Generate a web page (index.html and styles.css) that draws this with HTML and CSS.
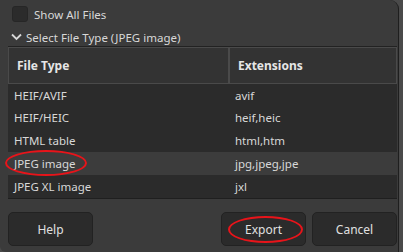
FILE: index.html
```html
<!DOCTYPE html>
<html>
<head>
<meta charset="utf-8">
<link rel="stylesheet" href="styles.css">
</head>
<body>
<div class="dialog">
  <label class="check-row">
    <span class="checkbox"></span>
    <span>Show All Files</span>
  </label>
  <div class="expander">
    <svg class="chev" width="11" height="8" viewBox="0 0 11 8"><path d="M1 1.5 L5.5 6 L10 1.5" fill="none" stroke="#d8d8d8" stroke-width="1.8"/></svg>
    <span>Select File Type (JPEG image)</span>
  </div>
  <div class="table">
    <div class="thead">
      <div class="th c1">File Type</div>
      <div class="th c2">Extensions</div>
    </div>
    <div class="tbody">
      <div class="tr"><div class="td c1">HEIF/AVIF</div><div class="td c2">avif</div></div>
      <div class="tr"><div class="td c1">HEIF/HEIC</div><div class="td c2">heif,heic</div></div>
      <div class="tr"><div class="td c1">HTML table</div><div class="td c2">html,htm</div></div>
      <div class="tr sel"><div class="td c1">JPEG image</div><div class="td c2">jpg,jpeg,jpe</div></div>
      <div class="tr"><div class="td c1">JPEG XL image</div><div class="td c2">jxl</div></div>
    </div>
  </div>
  <div class="buttons">
    <button class="btn">Help</button>
    <span class="spacer"></span>
    <button class="btn">Export</button>
    <button class="btn">Cancel</button>
  </div>
  <span class="mark mark-row"></span>
  <span class="mark mark-btn"></span>
</div>
</body>
</html>
```
FILE: styles.css
```css
html, body {
  margin: 0;
  padding: 0;
}
body {
  background: #4a4a4a;
  width: 403px;
  height: 252px;
  overflow: hidden;
  font-family: "Noto Sans", "Open Sans", sans-serif;
  font-size: 11.5px;
  color: #d8d8d8;
}
.dialog {
  position: relative;
  box-sizing: border-box;
  width: 399px;
  height: 252px;
  background: #3b3b3b;
  border-right: 1px solid #1e1e1e;
  border-top-right-radius: 9px;
  border-bottom-left-radius: 6px;
  padding: 4px 1px 0 8px;
  display: flex;
  flex-direction: column;
}
.check-row {
  display: flex;
  align-items: center;
  height: 20px;
  gap: 6px;
  padding-left: 4px;
}
.checkbox {
  box-sizing: border-box;
  width: 16px;
  height: 16px;
  background: #2b2b2b;
  border: 1px solid #262626;
  border-radius: 3px;
}
.expander {
  display: flex;
  align-items: center;
  height: 18px;
  margin-top: 4px;
  gap: 4px;
  padding-left: 3px;
}
.chev { display: block; }
.table {
  width: 389px;
  height: 153px;
  background: #2b2b2b;
  border-bottom: 1px solid #1f1f1f;
  box-sizing: border-box;
  display: flex;
  flex-direction: column;
}
.thead {
  display: flex;
  height: 38px;
  background: #333333;
  border-top: 1px solid #222;
}
.th {
  box-sizing: border-box;
  border: 1px solid #4a4a4a;
  font-weight: bold;
  font-size: 12px;
  display: flex;
  align-items: center;
  padding-left: 8px;
  color: #e6e6e6;
}
.th.c1 { width: 221px; }
.th.c2 { flex: 1; }
.tr {
  display: flex;
  height: 23px;
  align-items: center;
}
.tr:first-child { height: 22px; }
.tr.sel { background: #3c3c3c; }
.td.c1 { width: 221px; padding-left: 6px; box-sizing: border-box; }
.td.c2 { flex: 1; padding-left: 6px; }
.buttons {
  display: flex;
  margin-top: 13px;
  gap: 6px;
  width: 389px;
}
.spacer { flex: 1; }
.btn {
  box-sizing: border-box;
  width: 85px;
  height: 34px;
  background: #2b2b2b;
  border: 1px solid #222;
  border-radius: 5px;
  color: #e0e0e0;
  font-family: inherit;
  font-size: 12px;
  padding: 0;
}
.mark {
  position: absolute;
  border: 2.5px solid #e8141a;
  border-radius: 50%;
  box-sizing: border-box;
}
.mark-row { left: 5px; top: 150px; width: 82px; height: 26px; }
.mark-btn { left: 228px; top: 216px; width: 75px; height: 27px; }
```
